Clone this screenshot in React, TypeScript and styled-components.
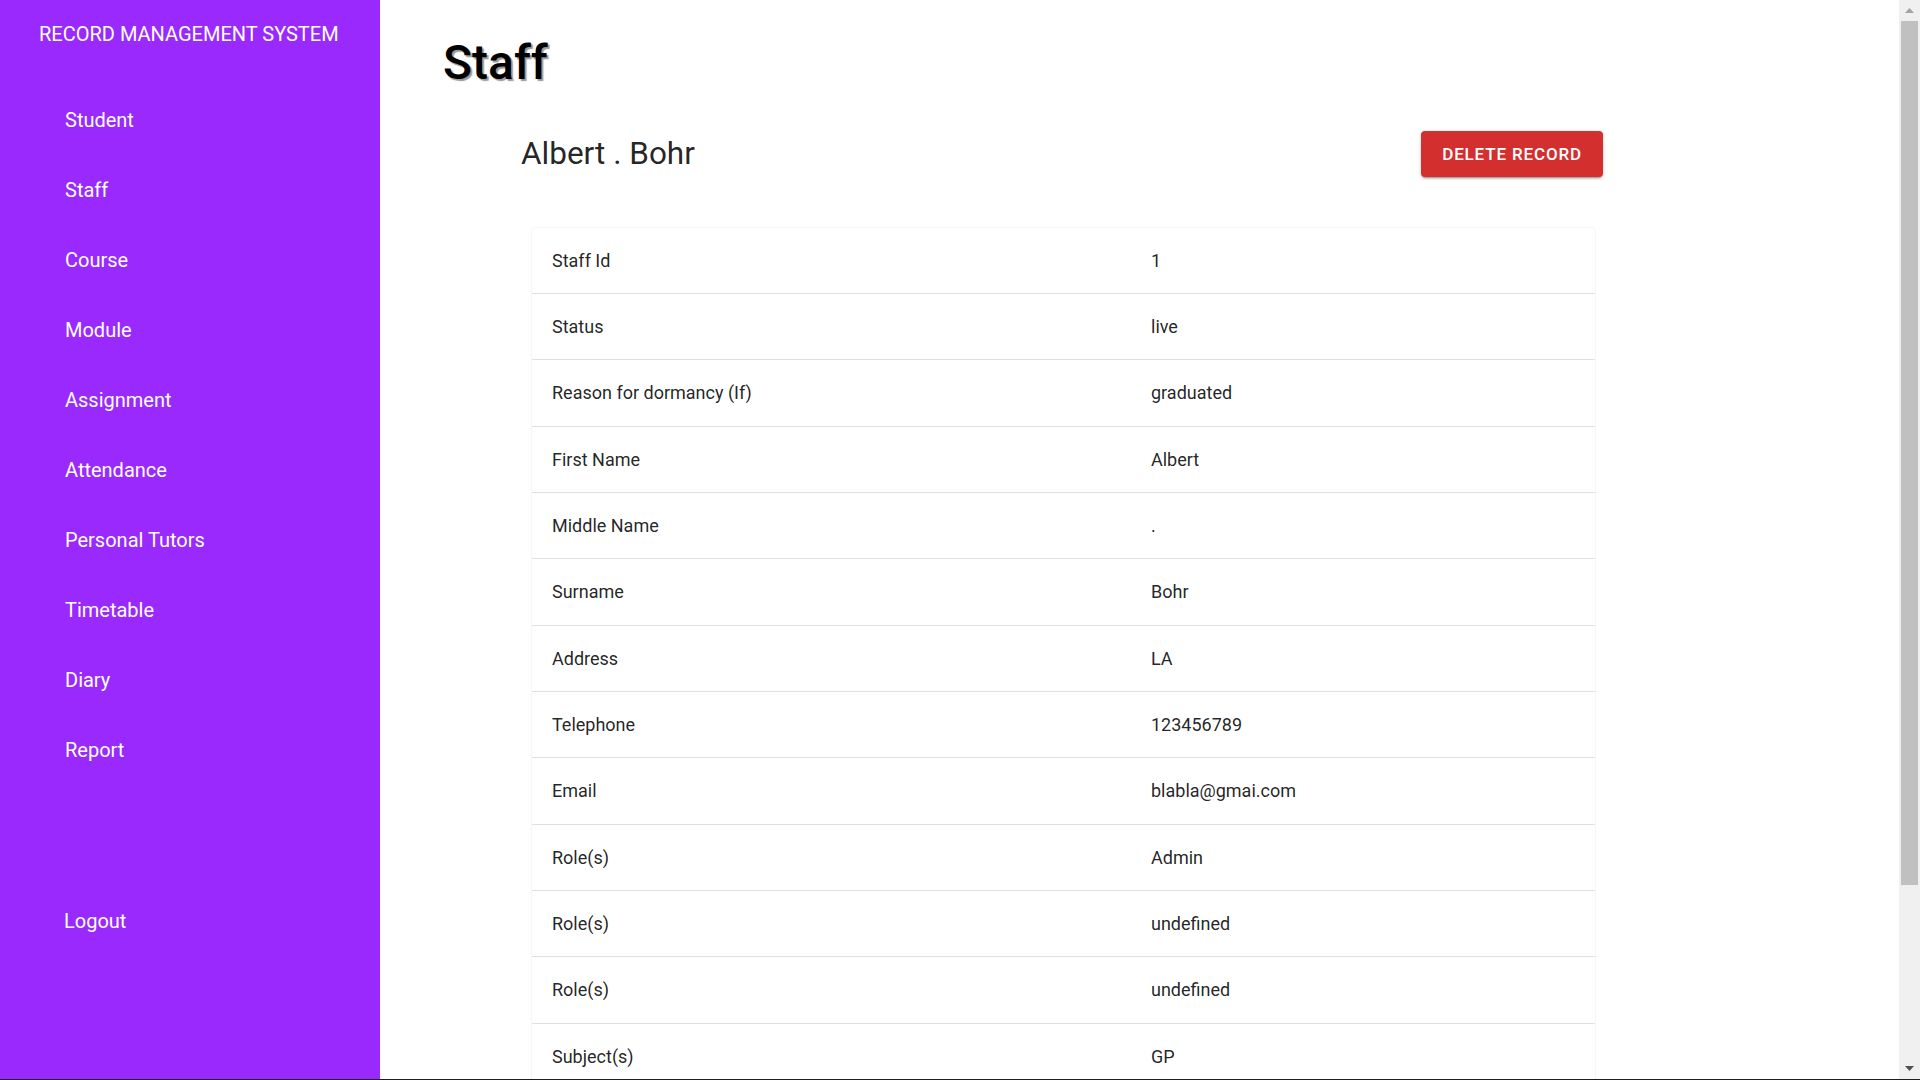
import React from "react";
import styled, { createGlobalStyle } from "styled-components";

const GlobalStyle = createGlobalStyle`
  html, body {
    margin: 0;
    padding: 0;
    height: 100%;
    overflow: hidden;
    background: #1e1e1e;
  }
  body {
    font-family: Roboto, "Helvetica Neue", Arial, sans-serif;
  }
  #root { height: 100%; }
`;

const Shell = styled.div`
  display: flex;
  height: calc(100vh - 1px);
  background: #ffffff;
`;

const Sidebar = styled.aside`
  width: 380px;
  flex-shrink: 0;
  box-sizing: border-box;
  padding-top: 22px;
  background: #9929fd;
  color: #ffffff;
  display: flex;
  flex-direction: column;
`;

const Brand = styled.div`
  padding-left: 39px;
  margin-bottom: 39px;
  font-size: 20px;
  line-height: 24px;
  text-transform: uppercase;
`;

const NavList = styled.nav`
  display: flex;
  flex-direction: column;
`;

const NavItem = styled.a`
  display: block;
  padding: 23px 0 23px 65px;
  font-size: 20px;
  line-height: 24px;
  color: #ffffff;
  text-decoration: none;
  cursor: pointer;
`;

const LogoutItem = styled(NavItem)`
  margin-top: 101px;
  padding-left: 64px;
`;

const Main = styled.main`
  flex: 1;
  min-width: 0;
  overflow: hidden;
  box-sizing: border-box;
  padding: 34px 0 8px 63px;
`;

const ScrollRail = styled.div`
  width: 21px;
  flex-shrink: 0;
  background: #f0f0f0;
  display: flex;
  flex-direction: column;
`;

const ScrollArrow = styled.div`
  height: 21px;
  flex-shrink: 0;
  display: flex;
  align-items: center;
  justify-content: center;
`;

const ScrollTrack = styled.div`
  flex: 1;
  padding: 0 2px;
`;

const ScrollThumb = styled.div`
  height: 864px;
  background: #c0c0c0;
`;

const PageTitle = styled.h1`
  margin: 0;
  font-size: 48px;
  line-height: 57.6px;
  font-weight: 500;
  color: #000000;
  text-shadow: 2px 2px 1px rgba(0, 0, 0, 0.4);
`;

const RecordHeader = styled.div`
  width: 1082px;
  margin: 39px 0 51px 78px;
  display: flex;
  align-items: center;
  justify-content: space-between;
`;

const RecordName = styled.h2`
  margin: 0;
  font-size: 31.5px;
  line-height: 40px;
  font-weight: 400;
  color: rgba(0, 0, 0, 0.87);
`;

const DangerButton = styled.button`
  height: 46px;
  padding: 0 21px;
  border: 0;
  border-radius: 4px;
  background: #d32f2f;
  color: #ffffff;
  font-family: inherit;
  font-size: 17px;
  font-weight: 500;
  letter-spacing: 0.85px;
  text-transform: uppercase;
  cursor: pointer;
  box-shadow: 0px 3px 1px -2px rgba(0, 0, 0, 0.2), 0px 2px 2px 0px rgba(0, 0, 0, 0.14),
    0px 1px 5px 0px rgba(0, 0, 0, 0.12);
`;

const DetailCard = styled.section`
  width: 1063px;
  margin-left: 89px;
  background: #ffffff;
  border-radius: 4px;
  box-shadow: 0 0 2px rgba(0, 0, 0, 0.12), 0 1px 1px rgba(0, 0, 0, 0.04);
`;

const DetailRow = styled.div`
  display: grid;
  grid-template-columns: 599px 1fr;
  border-bottom: 1px solid #e0e0e0;

  &:last-child {
    border-bottom: 0;
  }
`;

const Cell = styled.div`
  padding: 20px 20px;
  font-size: 18px;
  line-height: 25.33px;
  color: rgba(0, 0, 0, 0.87);
`;

const navItems = [
  "Student",
  "Staff",
  "Course",
  "Module",
  "Assignment",
  "Attendance",
  "Personal Tutors",
  "Timetable",
  "Diary",
  "Report",
];

const details: [string, string][] = [
  ["Staff Id", "1"],
  ["Status", "live"],
  ["Reason for dormancy (If)", "graduated"],
  ["First Name", "Albert"],
  ["Middle Name", "."],
  ["Surname", "Bohr"],
  ["Address", "LA"],
  ["Telephone", "123456789"],
  ["Email", "blabla@gmai.com"],
  ["Role(s)", "Admin"],
  ["Role(s)", "undefined"],
  ["Role(s)", "undefined"],
  ["Subject(s)", "GP"],
];

const Arrow = ({ up, color }: { up?: boolean; color: string }) => (
  <svg width="9" height="5" viewBox="0 0 9 5">
    <polygon points={up ? "0,5 9,5 4.5,0" : "0,0 9,0 4.5,5"} fill={color} />
  </svg>
);

export default function App() {
  return (
    <>
      <GlobalStyle />
      <Shell>
        <Sidebar>
          <Brand>Record Management System</Brand>
          <NavList>
            {navItems.map((item) => (
              <NavItem key={item}>{item}</NavItem>
            ))}
            <LogoutItem>Logout</LogoutItem>
          </NavList>
        </Sidebar>
        <Main>
          <PageTitle>Staff</PageTitle>
          <RecordHeader>
            <RecordName>Albert . Bohr</RecordName>
            <DangerButton>Delete Record</DangerButton>
          </RecordHeader>
          <DetailCard>
            {details.map(([label, value], i) => (
              <DetailRow key={i}>
                <Cell>{label}</Cell>
                <Cell>{value}</Cell>
              </DetailRow>
            ))}
          </DetailCard>
        </Main>
        <ScrollRail>
          <ScrollArrow>
            <Arrow up color="#a3a3a3" />
          </ScrollArrow>
          <ScrollTrack>
            <ScrollThumb />
          </ScrollTrack>
          <ScrollArrow>
            <Arrow color="#505050" />
          </ScrollArrow>
        </ScrollRail>
      </Shell>
    </>
  );
}
